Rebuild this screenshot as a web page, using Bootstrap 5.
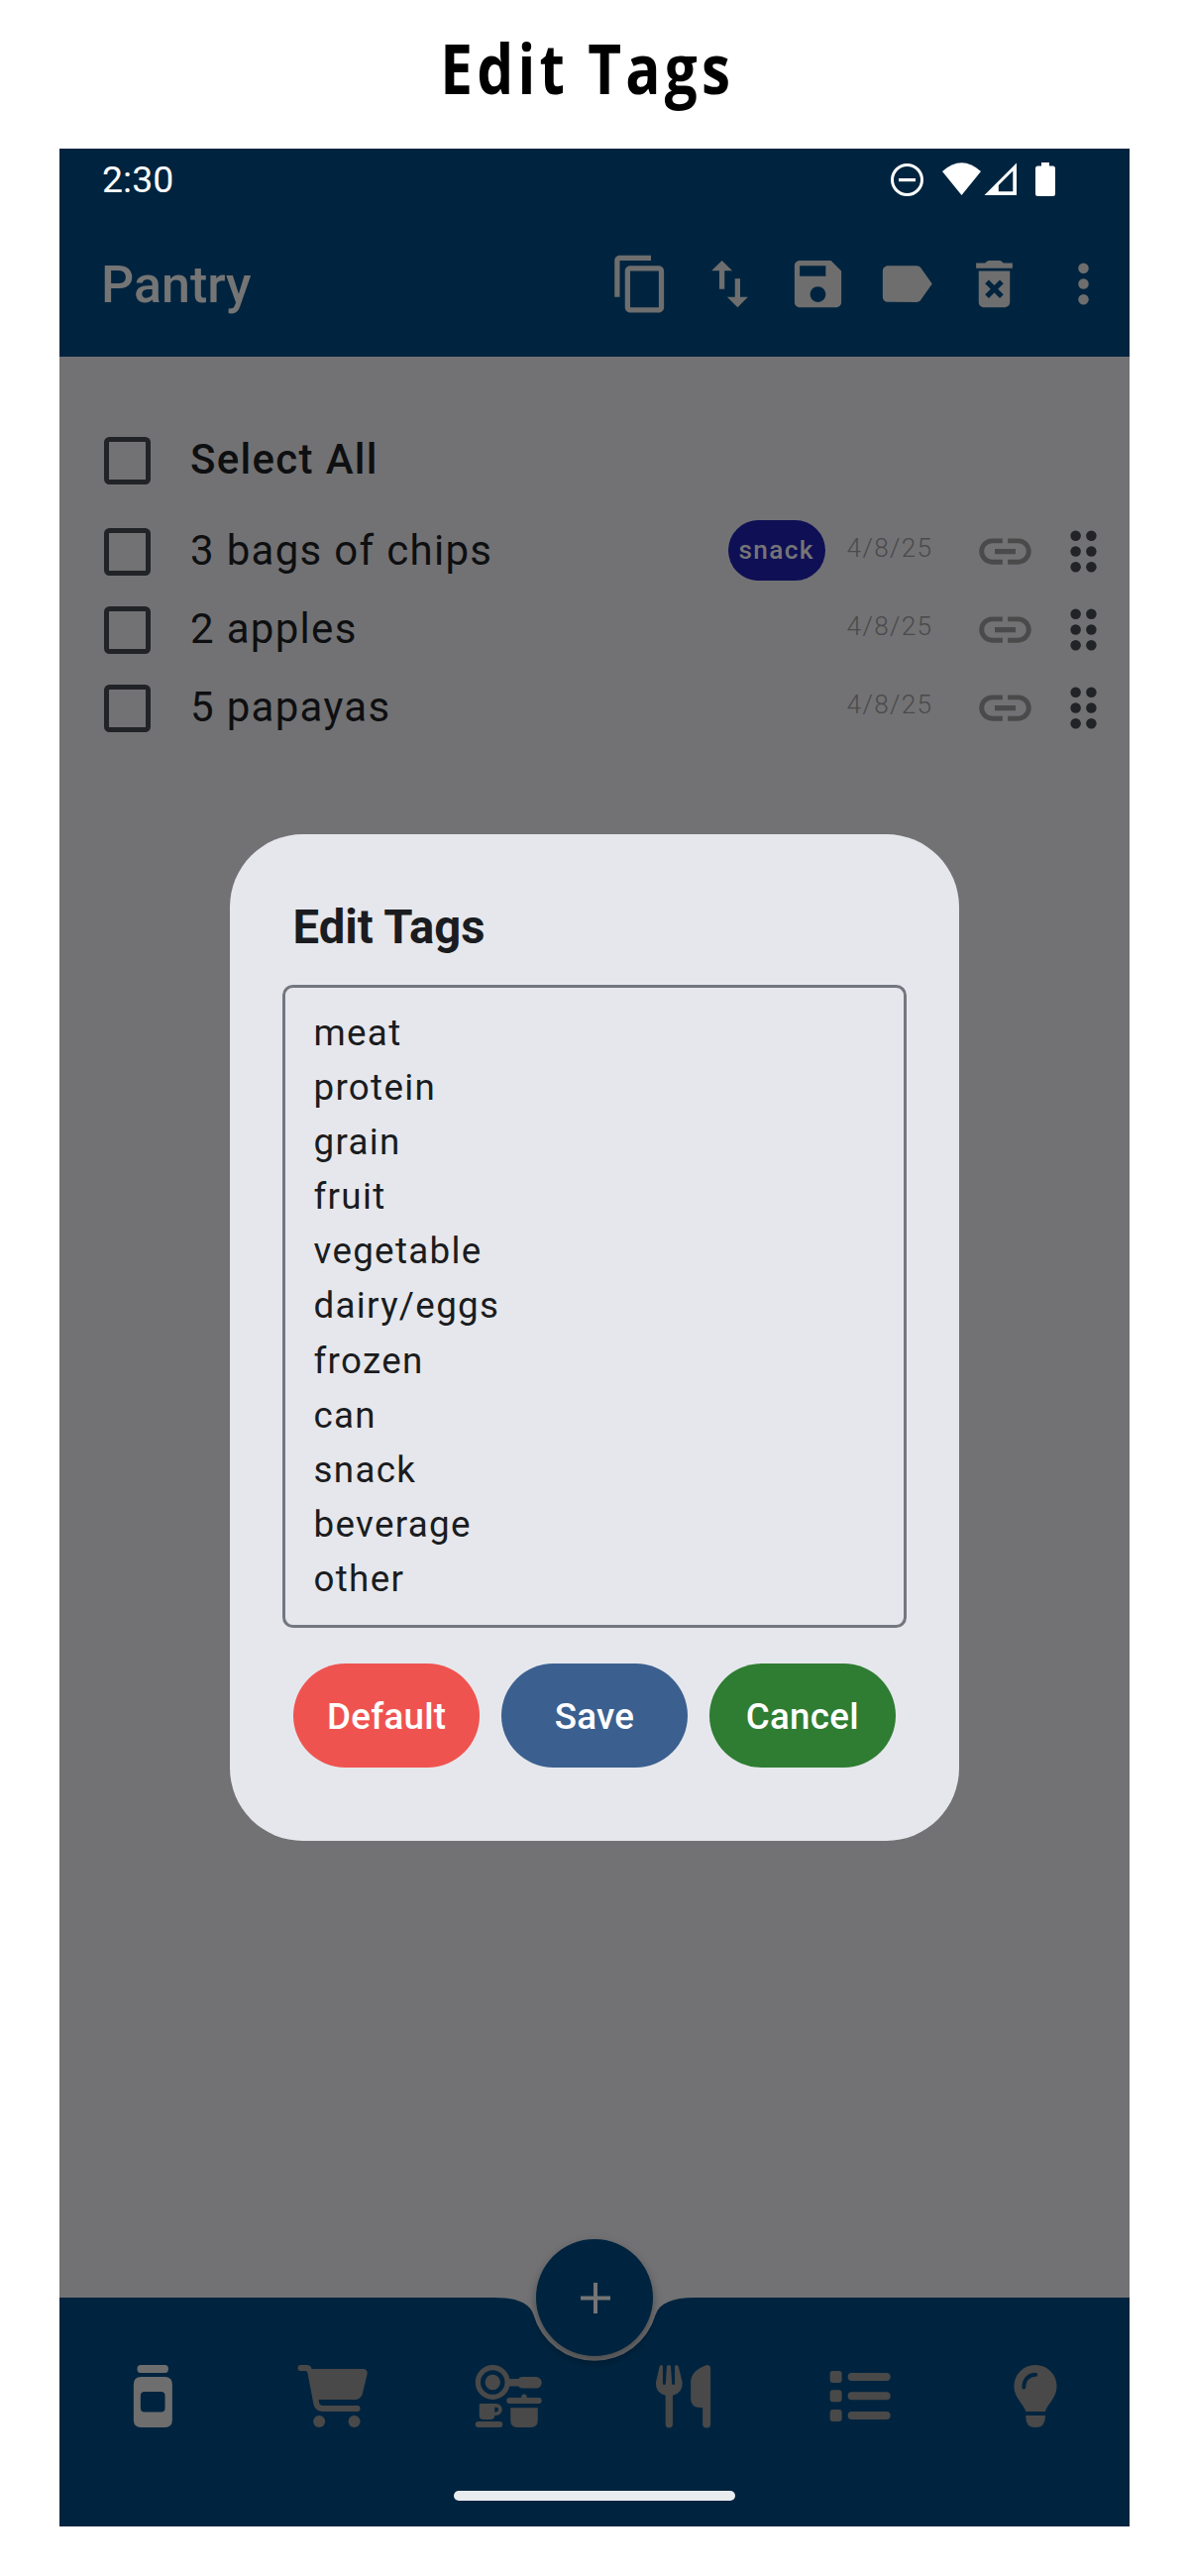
<!DOCTYPE html>
<html lang="en">
<head>
<meta charset="utf-8">
<meta name="viewport" content="width=device-width, initial-scale=1">
<title>Edit Tags</title>
<link href="https://cdn.jsdelivr.net/npm/bootstrap@5.3.0/dist/css/bootstrap.min.css" rel="stylesheet">
<style>
  body { width: 1200px; height: 2600px; background: #fff; font-family: Roboto, "Liberation Sans", sans-serif; overflow-x: hidden; }
  .promo { height: 150px; padding-top: 22px; color: #000; }
  .promo h1 { font: 700 70px/92px "Open Sans", sans-serif; letter-spacing: 5px; transform: scaleX(.835); white-space: nowrap; margin-left: -15px; }
  .phone { width: 1080px; height: 2400px; margin: 0 60px; background: #727274; }
  .topbar { background: #00243f; height: 210px; color: #757575; }
  .statusbar { height: 62px; padding: 0 75px 0 43px; color: #fff; font-size: 37.5px; line-height: 62px; }
  .appbar { height: 148px; padding: 0 15.5px 0 42px; }
  .appbar h2 { font-size: 52px; font-weight: 500; line-height: 60px; margin: 4px 0 0; }
  .actions { gap: 26.25px; color: #6e6e6e; }
  .ic { width: 63px; height: 63px; fill: currentColor; display: block; flex: none; }
  .pantry { padding-top: 59px; color: #0e0f11; font-size: 42px; letter-spacing: 1.31px; }
  .entry { height: 79px; padding: 0 15.5px 0 45px; }
  .entry.all { height: 92px; margin-bottom: 6px; font-weight: 500; }
  .tick { width: 47px; height: 48px; border: 5px solid #212326; border-radius: 5.5px; margin-right: 40px; flex: none; }
  .entry .nm { line-height: 50px; margin-top: -2px; }
  .tagchip { background: #0f0f55; color: #757575; font-size: 26.25px; font-weight: 500; line-height: 61px; height: 61px; border-radius: 31px; padding: 0 11px 0 11px; width: 98px; margin: -2px 22px 0 0; white-space: nowrap; }
  .day { font-size: 26.25px; font-weight: 300; color: #4a4a4c; line-height: 32px; margin: -7px 41.5px 0 0; }
  .lnk { color: #4a4a4a; margin-right: 15.5px; }
  .grip { color: #212326; }
  .bottombar { height: 231px; }
  .bottombar .shape { left: 0; top: 0; width: 1080px; height: 231px; }
  .fab { width: 118px; height: 118px; left: 481px; top: -59px; background: #00243f; color: #757575; border-radius: 50%; box-shadow: 0 6px 9px rgba(0,0,0,.28), 0 2px 12px rgba(0,0,0,.08); }
  .tabs { padding: 66px 0 0 5px; color: #494949; }
  .tabs svg { width: 178.3px; height: 68px; fill: currentColor; flex: none; display: block; }
  .home { width: 284px; height: 10px; border-radius: 5px; background: #e9edf0; margin: 61px auto 0; }
  .dlg { left: 172px; top: 692px; width: 735.5px; height: 1016px; border-radius: 73.5px; background: #e6e7ec; color: #1a1c20; padding: 64px 53px 0; }
  .dlg h3 { font-size: 47.25px; font-weight: 700; line-height: 60px; margin: 0 0 28px 10.5px; letter-spacing: 0; }
  .taglist { height: 649px; border: 3px solid #73777f; border-radius: 10.5px; padding: 18px 28.5px; font-size: 36.75px; line-height: 55.1px; letter-spacing: 1.31px; }
  .acts { gap: 21.5px; padding: 36px 10.5px 0 11px; }
  .acts .btn { height: 105px; border: 0; border-radius: 52.5px; color: #fff; font-size: 36.75px; font-weight: 500; letter-spacing: .26px; padding: 2px 0 0; }
  .b-def { background: #ef5350; } .b-save { background: #3b608f; } .b-can { background: #2e7d32; }
</style>
<script src="https://cdn.jsdelivr.net/npm/bootstrap@5.3.0/dist/js/bootstrap.bundle.min.js"></script>
</head>
<body>
<svg class="d-none">
  <symbol id="link" viewBox="0 0 24 24"><path d="M3.9 12c0-1.71 1.39-3.1 3.1-3.1h4V7H7c-2.76 0-5 2.24-5 5s2.24 5 5 5h4v-1.9H7c-1.71 0-3.1-1.39-3.1-3.1zM8 13h8v-2H8v2zm9-6h-4v1.9h4c1.71 0 3.1 1.39 3.1 3.1s-1.39 3.1-3.1 3.1h-4V17h4c2.76 0 5-2.24 5-5s-2.24-5-5-5z"/></symbol>
  <symbol id="grip" viewBox="0 0 24 24"><circle cx="9" cy="6" r="2"/><circle cx="9" cy="12" r="2"/><circle cx="9" cy="18" r="2"/><circle cx="15" cy="6" r="2"/><circle cx="15" cy="12" r="2"/><circle cx="15" cy="18" r="2"/></symbol>
</svg>

<header class="promo d-flex justify-content-center"><h1 class="mb-0">Edit Tags</h1></header>

<main class="phone position-relative d-flex flex-column">
  <div class="topbar">
    <div class="statusbar d-flex justify-content-between align-items-center">
      <span>2:30</span>
      <svg width="166" height="34" viewBox="899 164 166 34" fill="#fff">
        <circle cx="915.5" cy="181.5" r="15" fill="none" stroke="#fff" stroke-width="3"/>
        <path d="M907 180h17v3.2h-17z"/>
        <path d="M951 173q19.500-17.500 39 0L970.500 197z"/>
        <path fill-rule="evenodd" d="M993.500 197L1026 164.500V197zM1007.800 193.200H1022.300V172.500L1007.800 187z"/>
        <path d="M1051 164h8v3.500h3.500q2.500 0 2.500 2.500v25.500q0 2.500-2.500 2.500h-15q-2.500 0-2.500-2.500V170q0-2.500 2.500-2.500h3.500z"/>
      </svg>
    </div>
    <nav class="appbar d-flex justify-content-between align-items-center">
      <h2>Pantry</h2>
      <div class="actions d-flex">
        <svg class="ic" viewBox="0 0 24 24"><path d="M16 1H4c-1.100 0-2 .9-2 2v14h2V3h12V1zm3 4H8c-1.100 0-2 .9-2 2v14c0 1.100.9 2 2 2h11c1.100 0 2-.9 2-2V7c0-1.100-.9-2-2-2zm0 16H8V7h11v14z"/></svg>
        <svg class="ic" viewBox="0 0 24 24"><path d="M16 17.010V10h-2v7.010h-3L15 21l4-3.990h-3zM9 3L5 6.990h3V14h2V6.990h3L9 3z"/></svg>
        <svg class="ic" viewBox="0 0 24 24"><path d="M17 3H5c-1.110 0-2 .9-2 2v14c0 1.100.89 2 2 2h14c1.100 0 2-.9 2-2V7l-4-4zm-5 16c-1.660 0-3-1.340-3-3s1.340-3 3-3 3 1.340 3 3-1.340 3-3 3zm3-10H5V5h10v4z"/></svg>
        <svg class="ic" viewBox="0 0 24 24"><path d="M17.630 5.840C17.270 5.330 16.670 5 16 5L5 5.010C3.900 5.010 3 5.900 3 7v10c0 1.100.9 1.990 2 1.990L16 19c.67 0 1.270-.33 1.630-.84L22 12l-4.370-6.160z"/></svg>
        <svg class="ic" viewBox="0 0 24 24"><path d="M6 19c0 1.100.9 2 2 2h8c1.100 0 2-.9 2-2V7H6v12zm2.460-7.120l1.410-1.410L12 12.590l2.120-2.120 1.410 1.410L13.410 14l2.120 2.120-1.410 1.410L12 15.410l-2.120 2.120-1.410-1.410L10.590 14l-2.130-2.120zM15.500 4l-.7-.7q-.3-.3-.8-.3h-4q-.5 0-.8.3L8.500 4H5v2h14V4z"/></svg>
        <svg class="ic" viewBox="0 0 24 24"><circle cx="12" cy="6" r="2"/><circle cx="12" cy="12" r="2"/><circle cx="12" cy="18" r="2"/></svg>
      </div>
    </nav>
  </div>

  <section class="pantry flex-grow-1">
    <div class="entry all d-flex align-items-center"><span class="tick"></span><span class="nm">Select All</span></div>
    <div class="entry d-flex align-items-center"><span class="tick"></span><span class="nm me-auto">3 bags of chips</span><span class="tagchip">snack</span><span class="day">4/8/25</span><svg class="ic lnk"><use href="#link"/></svg><svg class="ic grip"><use href="#grip"/></svg></div>
    <div class="entry d-flex align-items-center"><span class="tick"></span><span class="nm me-auto">2 apples</span><span class="day">4/8/25</span><svg class="ic lnk"><use href="#link"/></svg><svg class="ic grip"><use href="#grip"/></svg></div>
    <div class="entry d-flex align-items-center"><span class="tick"></span><span class="nm me-auto">5 papayas</span><span class="day">4/8/25</span><svg class="ic lnk"><use href="#link"/></svg><svg class="ic grip"><use href="#grip"/></svg></div>
  </section>

  <footer class="bottombar position-relative">
    <svg class="shape position-absolute" viewBox="60 2319 1080 231"><path fill="#00243f" d="M60 2319H499Q533 2319 538.500 2336.500A64 64 0 0 0 661.500 2336.500Q667 2319 701 2319H1140V2550H60z"/></svg>
    <div class="fab position-absolute d-flex align-items-center justify-content-center">
      <svg width="31" height="31" viewBox="0 0 31 31" fill="currentColor"><path d="M14 0h4v13.500h13v4H18V31h-4V17.500H1v-4h13z"/></svg>
    </div>
    <nav class="tabs position-relative d-flex">
      <!-- jar -->
      <svg viewBox="65.150 2385 178.300 68" style="color:#6e6e6e"><rect x="138.700" y="2387" width="31.300" height="8" rx="3.500"/><path fill-rule="evenodd" d="M142.500 2399h24q7.500 0 7.500 7.500v36q0 7.500-7.500 7.500h-24q-7.500 0-7.500-7.500v-36q0-7.500 7.500-7.500zM146 2414q-4 0-4 4v12.500q0 4 4 4h16.700q4 0 4-4V2418q0-4-4-4z"/></svg>
      <!-- cart -->
      <svg viewBox="243.450 2385 178.300 68"><path d="M304 2387h5.500c3 0 5 1.600 5.600 4H367c2.800 0 4.700 2.500 4 5.200l-4.700 19.500c-1 4-4.200 6.300-8 6.300H322l.3 2c.4 2.500 1.800 4 4 4H361a3 3 0 0 1 0 6H326c-5 0-8.500-3.500-9.300-8.500L311 2395.500c-.2-1.700-1-2.500-2.200-2.500H304a3 3 0 0 1 0-6z"/><circle cx="322.600" cy="2444" r="6"/><circle cx="358" cy="2444" r="6"/></svg>
      <!-- cookware -->
      <svg viewBox="421.750 2385 178.300 68"><circle cx="497" cy="2404.500" r="14.900" fill="none" stroke="currentColor" stroke-width="5.200"/><circle cx="497" cy="2404.500" r="7.700"/><path d="M513 2401h10q1-2 4-2h13.700a5.800 5.800 0 0 1 0 11.600H527q-3 0-4-2h-10z"/><rect x="479.500" y="2444" width="27.500" height="6" rx="3"/><path fill-rule="evenodd" d="M485 2426h15.500a6 6 0 0 1 0 12H499q0 4-4 4h-7.500q-4 0-4-4v-10.500q0-1.500 1.500-1.500zM499 2429.800v4.600h1.500a2.300 2.300 0 0 0 0-4.600z"/><path d="M514 2420h12v-.700a2.700 2.700 0 0 1 5.400 0v.7h12.100a3 3 0 0 1 0 6H514a3 3 0 0 1 0-6zM515 2430.300h27.500V2443q0 7-7 7H522q-7 0-7-7z"/></svg>
      <!-- fork and knife -->
      <svg viewBox="600.050 2385 178.300 68"><path d="M667.300 2387q1.700 0 1.700 2v16.500q0 1.500 1.400 1.500t1.500-1.500l1.100-16.700q.2-1.800 2-1.800t2.100 1.800l1.100 16.700q.1 1.500 1.500 1.500t1.400-1.500V2389q0-2 1.700-2 1.600 0 2.100 1.900l3.800 15.500q.8 10.600-9.700 13.300v29a3.600 3.600 0 0 1-7.300 0v-29q-10.500-2.700-9.700-13.300l3.600-15.500q.4-1.900 1.700-1.900zM713.500 2387q3.700 0 3.700 3.500v56a3.700 3.700 0 0 1-8 0V2430h-2.500q-9.500 0-9.500-9.500v-16q0-12 16.300-17.500z"/></svg>
      <!-- list -->
      <svg viewBox="778.350 2385 178.300 68"><rect x="838" y="2393" width="12" height="12" rx="3"/><rect x="838" y="2412.300" width="12" height="12" rx="3"/><rect x="838" y="2432" width="12" height="12" rx="3"/><rect x="856" y="2395" width="43" height="8" rx="4"/><rect x="856" y="2414.300" width="43" height="8" rx="4"/><rect x="856" y="2434" width="43" height="8" rx="4"/></svg>
      <!-- bulb -->
      <svg viewBox="956.650 2385 178.300 68"><path d="M1036 2434c-2.500-8-12-14-12-25.500a21.600 21.600 0 0 1 43.200 0c0 11.500-9 17.500-11.700 25.500zM1036 2438h19.500v2q0 10-9.800 10t-9.700-10z"/><path d="M1034 2409.500c0-8 5-12.700 11.800-12.700" fill="none" stroke="#00243f" stroke-width="4" stroke-linecap="round"/></svg>
    </nav>
    <div class="home position-relative"></div>
  </footer>

  <div class="dlg position-absolute" role="dialog">
    <h3>Edit Tags</h3>
    <div class="taglist">
      <div>meat</div><div>protein</div><div>grain</div><div>fruit</div><div>vegetable</div><div>dairy/eggs</div><div>frozen</div><div>can</div><div>snack</div><div>beverage</div><div>other</div>
    </div>
    <div class="acts d-flex">
      <button class="btn flex-fill w-100 b-def">Default</button>
      <button class="btn flex-fill w-100 b-save">Save</button>
      <button class="btn flex-fill w-100 b-can">Cancel</button>
    </div>
  </div>
</main>
</body>
</html>
